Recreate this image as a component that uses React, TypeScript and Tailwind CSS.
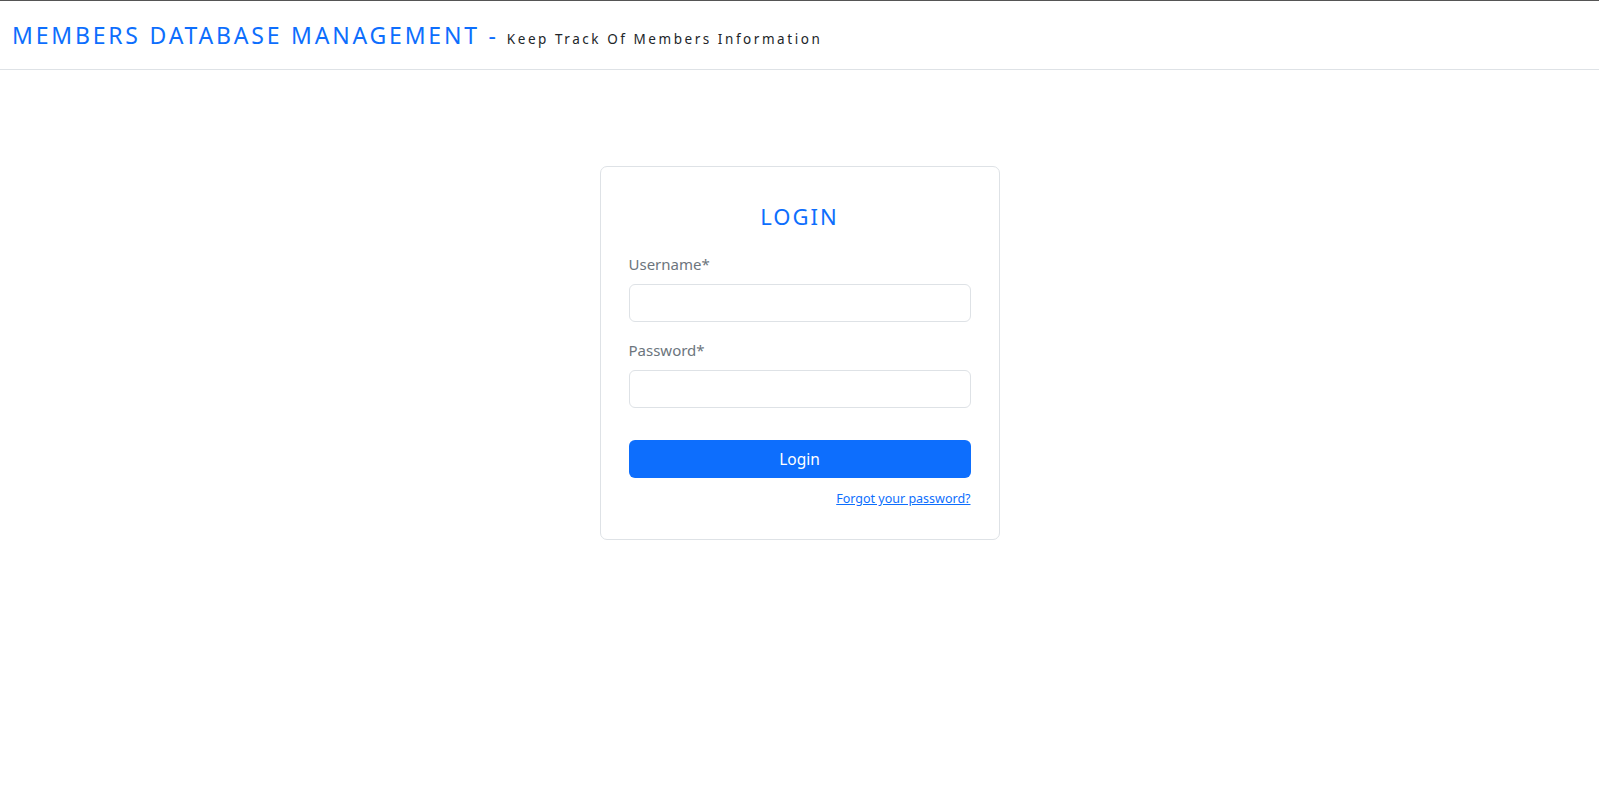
export default function App() {
  return (
    <div className="min-h-[797px] bg-white" style={{ fontFamily: '"Noto Sans", "Open Sans", sans-serif' }}>
      <header className="flex h-[70px] items-center border-t border-b border-t-[#555] border-b-[#dee2e6] px-3">
        <h1 className="flex items-baseline">
          <span className="text-[23px] tracking-[2.8px] text-[#0d6efd]">MEMBERS DATABASE MANAGEMENT -</span>
          <span className="ml-2 text-[13.5px] tracking-[2.55px] text-[#212529]">Keep Track Of Members Information</span>
        </h1>
      </header>
      <main className="flex justify-center pt-[96px]">
        <div className="w-[400px] rounded-[7px] border border-[#dee2e6] px-[28px] pt-[36px] pb-[30px]">
          <h2 className="mb-[23px] text-center text-[22px] leading-[1.2] tracking-[2px] text-[#0d6efd]">LOGIN</h2>
          <form onSubmit={(e) => e.preventDefault()}>
            <div className="mb-4">
              <label className="mb-2 block text-[15px] leading-6 text-[#6c757d]">Username*</label>
              <input
                type="text"
                className="block h-[38px] w-full rounded-[6px] border border-[#dee2e6] px-3 text-[15px] outline-none"
              />
            </div>
            <div className="mb-8">
              <label className="mb-2 block text-[15px] leading-6 text-[#6c757d]">Password*</label>
              <input
                type="password"
                className="block h-[38px] w-full rounded-[6px] border border-[#dee2e6] px-3 text-[15px] outline-none"
              />
            </div>
            <button
              type="submit"
              className="block h-[38px] w-full rounded-[6px] bg-[#0d6efd] text-[15.5px] text-white"
            >
              Login
            </button>
            <div className="mt-[9px] text-right leading-5">
              <a href="#" className="text-[12.5px] text-[#0d6efd] underline">
                Forgot your password?
              </a>
            </div>
          </form>
        </div>
      </main>
    </div>
  );
}
